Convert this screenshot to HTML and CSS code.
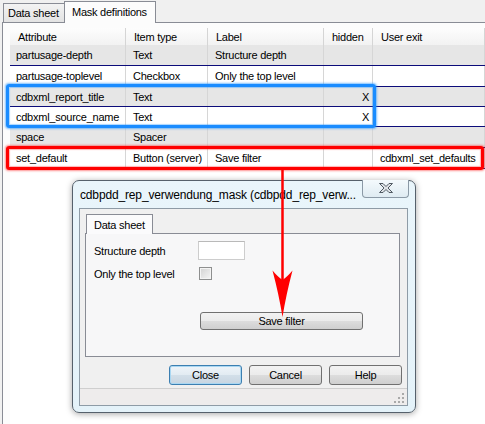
FILE: index.html
```html
<!DOCTYPE html>
<html>
<head>
<meta charset="utf-8">
<link rel="stylesheet" href="styles.css">
</head>
<body>
<div class="tabs">
  <div class="tab">Data sheet</div>
  <div class="tab active">Mask definitions</div>
</div>
<div class="panel">
  <div class="grid">
    <div class="row head">
      <div class="c">Attribute</div><div class="c">Item type</div><div class="c">Label</div><div class="c">hidden</div><div class="c">User exit</div>
    </div>
    <div class="row odd">
      <div class="c">partusage-depth</div><div class="c">Text</div><div class="c">Structure depth</div><div class="c"></div><div class="c"></div>
    </div>
    <div class="row">
      <div class="c">partusage-toplevel</div><div class="c">Checkbox</div><div class="c">Only the top level</div><div class="c"></div><div class="c"></div>
    </div>
    <div class="row odd short">
      <div class="c">cdbxml_report_title</div><div class="c">Text</div><div class="c"></div><div class="c x">X</div><div class="c"></div>
    </div>
    <div class="row short">
      <div class="c">cdbxml_source_name</div><div class="c">Text</div><div class="c"></div><div class="c x">X</div><div class="c"></div>
    </div>
    <div class="row odd">
      <div class="c">space</div><div class="c">Spacer</div><div class="c"></div><div class="c"></div><div class="c"></div>
    </div>
    <div class="row">
      <div class="c">set_default</div><div class="c">Button (server)</div><div class="c">Save filter</div><div class="c"></div><div class="c">cdbxml_set_defaults</div>
    </div>
  </div>
</div>

<div class="hl hl-blue"></div>
<div class="hl hl-red"></div>

<div class="dialog">
  <div class="titlebar">
    <span class="title">cdbpdd_rep_verwendung_mask (cdbpdd_rep_verw...</span>
    <div class="closebtn">
      <svg width="14" height="11" viewBox="0 0 14 11"><polygon points="0.5,0.5 4,0.5 7,3.5 10,0.5 13.5,0.5 9,5 13.5,9.5 10,9.5 7,6.5 4,9.5 0.5,9.5 5,5" fill="#dfe3e7" stroke="#4f5962" stroke-width="1" stroke-linejoin="round"/></svg>
    </div>
  </div>
  <div class="client">
    <div class="dtabs">
      <div class="dtab">Data sheet</div>
    </div>
    <div class="page">
      <div class="frow">
        <span class="flabel">Structure depth</span>
        <div class="input"></div>
      </div>
      <div class="frow frow2">
        <span class="flabel">Only the top level</span>
        <div class="check"></div>
      </div>
      <div class="btn savebtn">Save filter</div>
    </div>
    <div class="buttons">
      <div class="btn dbtn focus">Close</div>
      <div class="btn dbtn">Cancel</div>
      <div class="btn dbtn">Help</div>
    </div>
    <div class="status">
      <svg class="grip" width="11" height="11" viewBox="0 0 11 11">
        <g fill="#a9a9a9">
          <rect x="8" y="0" width="2" height="2"/>
          <rect x="4" y="4" width="2" height="2"/><rect x="8" y="4" width="2" height="2"/>
          <rect x="0" y="8" width="2" height="2"/><rect x="4" y="8" width="2" height="2"/><rect x="8" y="8" width="2" height="2"/>
        </g>
      </svg>
    </div>
  </div>
</div>

<svg class="arrow" width="485" height="424" viewBox="0 0 485 424">
  <line x1="282.5" y1="169" x2="282.5" y2="290" stroke="#ff0000" stroke-width="2.5"/>
  <path d="M282.5,317 Q279,295 272.5,270.5 Q278,277 282.5,280 Q287,277 292.5,270.5 Q286,295 282.5,317 Z" fill="#ff0000"/>
</svg>
</body>
</html>
```
FILE: styles.css
```css
html, body {
  margin: 0;
  padding: 0;
}
body {
  width: 485px;
  height: 424px;
  overflow: hidden;
  position: relative;
  background: #f0f0f0;
  font-family: "Liberation Sans", Arial, sans-serif;
  font-size: 11px;
  letter-spacing: -0.25px;
  color: #000;
  display: flex;
  flex-direction: column;
}

/* top tab strip */
.tabs {
  display: flex;
  align-items: flex-end;
  height: 22px;
  padding-left: 3px;
  flex: none;
}
.tab {
  box-sizing: border-box;
  height: 19px;
  width: 62px;
  padding-left: 4px;
  border: 1px solid #898c95;
  border-bottom: none;
  background: linear-gradient(#f3f3f3, #e3e3e3);
  display: flex;
  align-items: center;
}
.tab.active {
  height: 22px;
  width: 92px;
  margin-left: -1px;
  margin-bottom: -1px;
  padding-left: 7px;
  background: #fcfcfc;
  position: relative;
  z-index: 1;
  padding-bottom: 1px;
}

/* main panel */
.panel {
  flex: 1;
  margin-left: 2px;
  border-top: 1px solid #898c95;
  border-left: 1px solid #898c95;
  background: #fcfcfc;
  padding: 5px 0 0 7px;
  display: flex;
  flex-direction: column;
}
.grid {
  flex: 1;
  background: #ffffff;
}
.row {
  display: grid;
  grid-template-columns: 116px 82px 116px 49px 1fr;
  height: 21px;
  box-sizing: border-box;
  border-bottom: 1px solid #0c0c7a;
  align-items: stretch;
}
.row.short {
  height: 20px;
}
.row.odd {
  background: #e6e6e6;
}
.c {
  box-sizing: border-box;
  border-right: 1px solid #d6d6d6;
  padding-left: 7px;
  white-space: nowrap;
  overflow: hidden;
  display: flex;
  align-items: center;
}
.row .c:first-child {
  padding-left: 6px;
}
.c.x {
  justify-content: flex-end;
  padding-right: 3px;
}
.row.head {
  height: 17px;
  border-bottom: none;
  background: linear-gradient(#fdfdfd, #f2f2f2);
}
.row.head .c {
  padding-left: 8px;
  border-right: 1px solid #d5d5d5;
}

/* highlight frames */
.hl {
  position: absolute;
  box-sizing: border-box;
  border-radius: 3px;
}
.hl-blue {
  left: 6px;
  top: 84px;
  width: 370px;
  height: 44px;
  border: 3px solid #1a8cff;
  box-shadow: 0 0 2px 1px rgba(40, 150, 255, 0.6), inset 0 0 1px 1px rgba(40, 150, 255, 0.4);
}
.hl-red {
  left: 6px;
  top: 146px;
  width: 478px;
  height: 24px;
  border: 3px solid #ff0000;
  box-shadow: 0 0 2px 1px rgba(255, 40, 40, 0.5), inset 0 0 1px 1px rgba(255, 40, 40, 0.35);
}

/* dialog window */
.dialog {
  position: absolute;
  left: 72px;
  top: 180px;
  width: 344px;
  height: 233px;
  box-sizing: border-box;
  border: 1px solid #56616c;
  border-radius: 7px;
  background: linear-gradient(#e9f5fb, #e4f2f9);
  box-shadow: 0 1px 6px rgba(0, 0, 0, 0.35);
  display: flex;
  flex-direction: column;
}
.titlebar {
  height: 27px;
  flex: none;
  position: relative;
  padding-left: 7px;
  display: flex;
  align-items: center;
}
.title {
  font-size: 12px;
  letter-spacing: -0.15px;
  padding-top: 1px;
}
.closebtn {
  position: absolute;
  right: 6px;
  top: -1px;
  width: 47px;
  height: 18px;
  box-sizing: border-box;
  border: 1px solid #8b99a6;
  border-top: none;
  border-radius: 0 0 4px 4px;
  background: linear-gradient(#f4fafd, #dfebf2);
  display: flex;
  align-items: center;
  justify-content: center;
}
.client {
  flex: 1;
  margin: 0 7px 6px 6px;
  border: 1px solid #8e9ba6;
  background: #f0f0f0;
  display: flex;
  flex-direction: column;
}
.dtabs {
  display: flex;
  padding: 5px 0 0 6px;
}
.dtab {
  box-sizing: border-box;
  height: 20px;
  width: 67px;
  padding-left: 7px;
  border: 1px solid #898c95;
  border-bottom: none;
  background: #fbfbfc;
  margin-bottom: -1px;
  position: relative;
  z-index: 1;
  display: flex;
  align-items: center;
}
.page {
  box-sizing: border-box;
  margin-left: 5px;
  width: 315px;
  height: 124px;
  border: 1px solid #898c95;
  background: #f7f7f8;
  padding: 7px 0 0 8px;
}
.frow {
  display: flex;
  align-items: center;
  height: 19px;
}
.frow2 {
  margin-top: 7px;
  height: 13px;
}
.flabel {
  width: 104px;
}
.input {
  box-sizing: border-box;
  width: 47px;
  height: 19px;
  background: #ffffff;
  border: 1px solid #cdcdcd;
  border-top-color: #b9b9b9;
}
.check {
  box-sizing: border-box;
  margin-left: 1px;
  width: 13px;
  height: 13px;
  border: 1px solid #8e8f8f;
  background: linear-gradient(135deg, #d2d2d2, #f6f6f6);
  box-shadow: inset 0 0 0 1px #f4f4f4;
}
.btn {
  box-sizing: border-box;
  border: 1px solid #707070;
  border-radius: 3px;
  background: linear-gradient(#f2f2f2 0%, #ebebeb 50%, #dddddd 50%, #cfcfcf 100%);
  display: flex;
  align-items: center;
  justify-content: center;
}
.savebtn {
  margin-top: 32px;
  margin-left: 106px;
  width: 163px;
  height: 18px;
}
.buttons {
  display: flex;
  justify-content: flex-end;
  gap: 7px;
  margin-top: 8px;
  padding-right: 5px;
}
.dbtn {
  width: 73px;
  height: 20px;
}
.btn.focus {
  border-color: #3c7fb1;
  background: linear-gradient(#eef4f9 0%, #e2ebf2 50%, #d3dfe9 50%, #c7d5e1 100%);
  box-shadow: inset 0 0 0 1px #a9d7f2;
}
.status {
  flex: 1;
  margin-top: 3px;
  border-top: 1px solid #cfcfcf;
  background: #eeecec;
  position: relative;
}
.grip {
  position: absolute;
  right: 2px;
  bottom: 1px;
}

/* red arrow overlay */
.arrow {
  position: absolute;
  left: 0;
  top: 0;
  pointer-events: none;
}
```
